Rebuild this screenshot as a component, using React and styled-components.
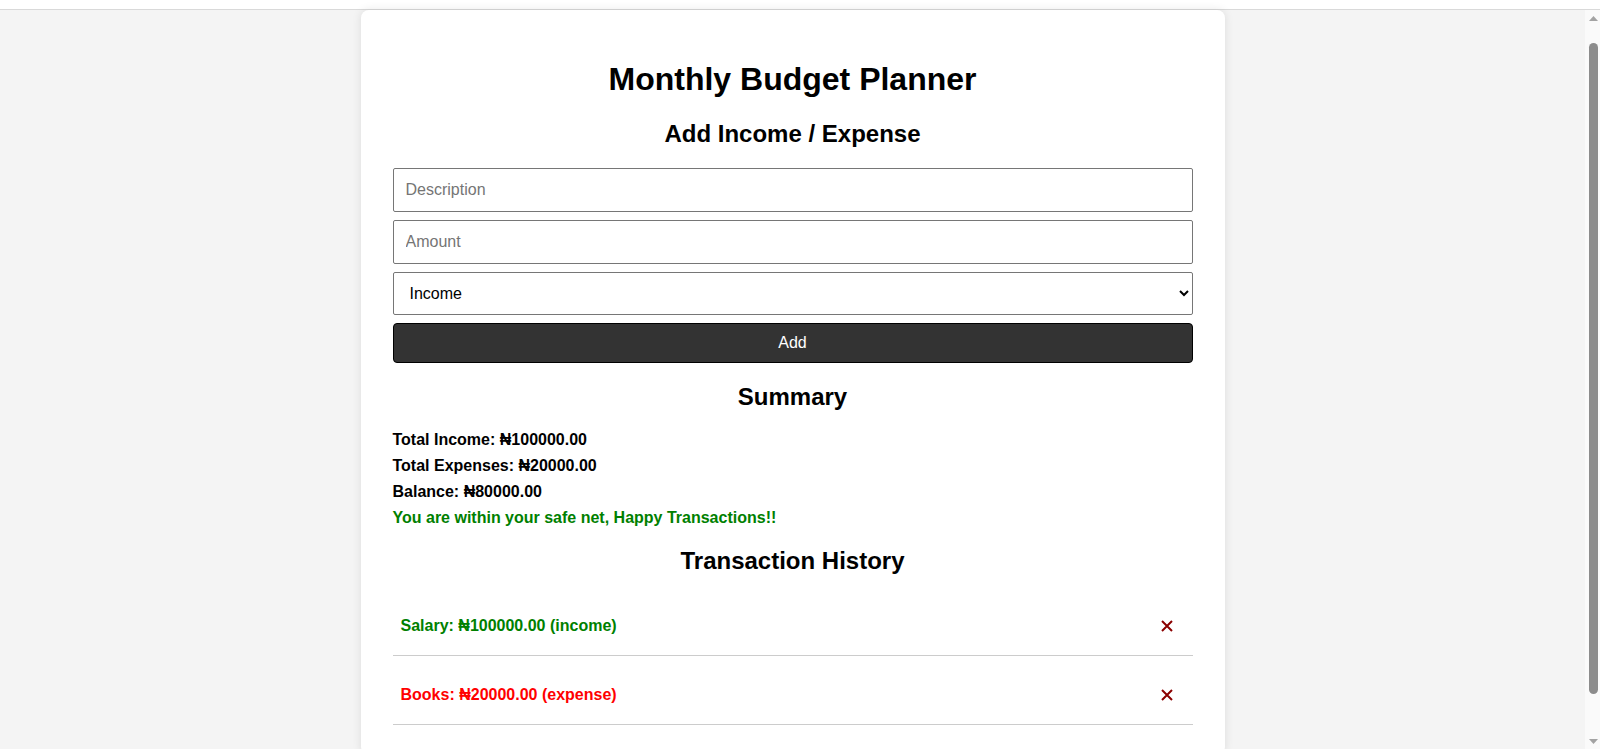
import React, { useState } from "react";
import styled, { createGlobalStyle } from "styled-components";

const GlobalStyle = createGlobalStyle`
  html, body {
    margin: 0;
    padding: 0;
    background: #f4f4f4;
    font-family: "Liberation Sans", Arial, sans-serif;
    color: #000;
  }
  * { box-sizing: border-box; }
`;

const TopStrip = styled.div`
  height: 10px;
  background: #ffffff;
  border-bottom: 1px solid #d9d9d9;
`;

const Frame = styled.div`
  display: grid;
  grid-template-columns: 1fr 15px;
  align-items: start;
`;

const Viewport = styled.div`
  min-width: 0;
`;

const ScrollRail = styled.div`
  display: flex;
  flex-direction: column;
  align-items: center;
  height: 739px;
  padding: 6px 0 5px;
  background: #fafafa;
`;

const RailThumb = styled.div`
  width: 9px;
  height: 651px;
  margin-top: 22px;
  margin-left: 1px;
  border-radius: 5px;
  background: #8c8c8c;
`;

const RailSpacer = styled.div`
  flex: 1;
`;

const Arrow = ({ down }) => (
  <svg width="9" height="5" viewBox="0 0 9 5" aria-hidden="true" style={{ display: "block", marginLeft: 1 }}>
    <path d={down ? "M0 0 L9 0 L4.5 5 Z" : "M0 5 L9 5 L4.5 0 Z"} fill="#a3a3a3" />
  </svg>
);

const Card = styled.main`
  width: 864px;
  margin: 0 auto 28px;
  padding: 30px 32px 30px;
  background: #ffffff;
  border-radius: 8px;
  box-shadow: 0 0 10px rgba(0, 0, 0, 0.1);
`;

const Title = styled.h1`
  text-align: center;
  font-size: 32px;
  font-weight: bold;
  margin: 21px 0 22px;
`;

const SectionTitle = styled.h2`
  text-align: center;
  font-size: 24px;
  font-weight: bold;
  margin: 20px 0;
`;

const Field = styled.input`
  display: block;
  width: 100%;
  margin: 8px 0;
  padding: 12px;
  font-family: inherit;
  font-size: 16px;
  border: 1px solid #767676;
  border-radius: 2px;
  background: #fff;
  color: #000;
  &::placeholder { color: #757575; }
`;

const Picker = styled.select`
  display: block;
  width: 100%;
  margin: 8px 0;
  padding: 11px 10px 11px 12px;
  font-family: inherit;
  font-size: 16px;
  border: 1px solid #767676;
  border-radius: 2px;
  background: #fff;
  color: #000;
`;

const AddButton = styled.button`
  display: block;
  width: 100%;
  margin: 8px 0;
  padding: 10px;
  font-family: inherit;
  font-size: 16px;
  color: #fff;
  background: #333333;
  border: 1px solid #000;
  border-radius: 4px;
  cursor: pointer;
`;

const Line = styled.p`
  margin: 8px 0;
  font-size: 16px;
  font-weight: bold;
  color: ${(p) => p.$color || "#000"};
`;

const List = styled.ul`
  list-style: none;
  margin: 0;
  padding: 0;
`;

const Item = styled.li`
  display: flex;
  justify-content: space-between;
  align-items: center;
  margin-top: 8px;
  padding: 16px 8px 14px;
  border-bottom: 1px solid #cccccc;
  font-size: 16px;
  font-weight: bold;
  color: ${(p) => (p.$type === "income" ? "#008000" : "#ff0000")};
`;

const DeleteButton = styled.button`
  display: flex;
  align-items: center;
  justify-content: center;
  width: 32px;
  height: 30px;
  margin-right: 2px;
  padding: 0;
  background: transparent;
  border: none;
  color: #8b0000;
  cursor: pointer;
`;

const CrossIcon = () => (
  <svg width="12" height="12" viewBox="0 0 12 12" aria-hidden="true">
    <path d="M1 1 L11 11 M11 1 L1 11" stroke="currentColor" strokeWidth="2" strokeLinecap="butt" />
  </svg>
);

const initial = [
  { id: 1, description: "Salary", amount: 100000, type: "income" },
  { id: 2, description: "Books", amount: 20000, type: "expense" },
];

export default function App() {
  const [items, setItems] = useState(initial);
  const [desc, setDesc] = useState("");
  const [amount, setAmount] = useState("");
  const [type, setType] = useState("income");

  const income = items.filter((i) => i.type === "income").reduce((s, i) => s + i.amount, 0);
  const expense = items.filter((i) => i.type === "expense").reduce((s, i) => s + i.amount, 0);
  const balance = income - expense;

  const add = () => {
    const value = parseFloat(amount);
    if (!desc || isNaN(value)) return;
    setItems([...items, { id: Date.now(), description: desc, amount: value, type }]);
    setDesc("");
    setAmount("");
  };

  return (
    <>
      <GlobalStyle />
      <TopStrip />
      <Frame>
        <Viewport>
          <Card>
            <Title>Monthly Budget Planner</Title>
            <SectionTitle>Add Income / Expense</SectionTitle>
            <Field placeholder="Description" value={desc} onChange={(e) => setDesc(e.target.value)} />
            <Field placeholder="Amount" type="number" value={amount} onChange={(e) => setAmount(e.target.value)} />
            <Picker value={type} onChange={(e) => setType(e.target.value)}>
              <option value="income">Income</option>
              <option value="expense">Expense</option>
            </Picker>
            <AddButton onClick={add}>Add</AddButton>

            <SectionTitle>Summary</SectionTitle>
            <Line>Total Income: ₦{income.toFixed(2)}</Line>
            <Line>Total Expenses: ₦{expense.toFixed(2)}</Line>
            <Line>Balance: ₦{balance.toFixed(2)}</Line>
            <Line $color={balance >= 0 ? "#008000" : "#ff0000"}>
              {balance >= 0
                ? "You are within your safe net, Happy Transactions!!"
                : "You have exceeded your budget!"}
            </Line>

            <SectionTitle>Transaction History</SectionTitle>
            <List>
              {items.map((i) => (
                <Item key={i.id} $type={i.type}>
                  <span>
                    {i.description}: ₦{i.amount.toFixed(2)} ({i.type})
                  </span>
                  <DeleteButton aria-label="Delete" onClick={() => setItems(items.filter((x) => x.id !== i.id))}>
                    <CrossIcon />
                  </DeleteButton>
                </Item>
              ))}
            </List>
          </Card>
        </Viewport>
        <ScrollRail aria-hidden="true">
          <Arrow />
          <RailThumb />
          <RailSpacer />
          <Arrow down />
        </ScrollRail>
      </Frame>
    </>
  );
}
